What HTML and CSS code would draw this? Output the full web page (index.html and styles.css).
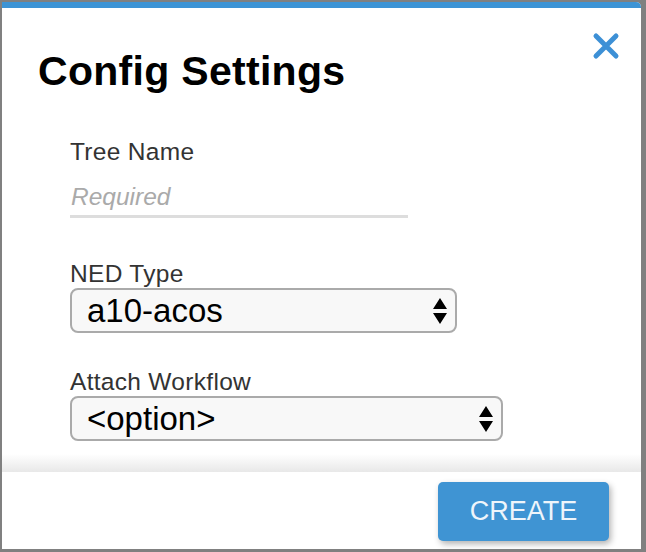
FILE: index.html
```html
<!DOCTYPE html>
<html lang="en">
<head>
    <meta charset="UTF-8">
    <meta name="viewport" content="width=device-width, initial-scale=1.0">
    <title>Config Settings</title>
    <link rel="stylesheet" href="styles.css">
</head>
<body>

    <div class="modal">
        <div class="modal-header">
            <h1 class="modal-title">Config Settings</h1>
            <button class="close-button" aria-label="Close">
                <svg width="28" height="28" viewBox="0 0 28 28">
                    <path d="M4 4 L24 24 M24 4 L4 24" stroke="#3d90d6" stroke-width="5" stroke-linecap="round" fill="none"/>
                </svg>
            </button>
        </div>

        <div class="modal-body">
            <label class="field-label" for="treeName">Tree Name</label>
            <input id="treeName" class="text-input" type="text" placeholder="Required">

            <label class="field-label spaced" for="nedType">NED Type</label>
            <div class="select-wrap ned">
                <select id="nedType" class="select-box">
                    <option>a10-acos</option>
                </select>
                <svg class="select-arrows" width="14" height="26" viewBox="0 0 14 26">
                    <path d="M7 0 L14 11 L0 11 Z M0 15 L14 15 L7 26 Z" fill="#000"/>
                </svg>
            </div>

            <label class="field-label spaced-small" for="workflow">Attach Workflow</label>
            <div class="select-wrap workflow">
                <select id="workflow" class="select-box">
                    <option>&lt;option&gt;</option>
                </select>
                <svg class="select-arrows" width="14" height="26" viewBox="0 0 14 26">
                    <path d="M7 0 L14 11 L0 11 Z M0 15 L14 15 L7 26 Z" fill="#000"/>
                </svg>
            </div>
        </div>

        <div class="modal-footer">
            <button class="create-button">CREATE</button>
        </div>
    </div>

</body>
</html>
```

FILE: styles.css
```css
html, body {
    height: 100%;
}

body {
    margin: 0;
    padding: 2px 5px 3px 2px;
    box-sizing: border-box;
    background-color: #808080;
    font-family: "Liberation Sans", Arial, sans-serif;
    overflow: hidden;
}

.modal {
    height: 100%;
    display: flex;
    flex-direction: column;
    background-color: #fff;
    border-top-right-radius: 5px;
    overflow: hidden;
}

.modal-header {
    position: relative;
    height: 101px;
    box-sizing: border-box;
    border-top: 6px solid #3d94d5;
    padding: 43px 0 0 36px;
}

.modal-title {
    margin: 0;
    font-size: 41px;
    line-height: 40px;
    font-weight: bold;
    letter-spacing: 0.3px;
    color: #000;
}

.close-button {
    position: absolute;
    top: 24px;
    right: 21px;
    padding: 0;
    border: none;
    background: none;
    cursor: pointer;
}

.close-button svg {
    display: block;
}

.modal-body {
    flex: 1;
    display: flex;
    flex-direction: column;
    align-items: flex-start;
    padding: 35px 0 0 68px;
    background: linear-gradient(to bottom, #fff calc(100% - 18px), #e8e8e8);
}

.field-label {
    font-size: 24.5px;
    line-height: 28px;
    letter-spacing: 0.3px;
    color: #333;
}

.field-label.spaced {
    margin-top: 42px;
}

.field-label.spaced-small {
    margin-top: 35px;
}

.text-input {
    margin-top: 17px;
    width: 338px;
    box-sizing: border-box;
    padding: 0 0 4px 1px;
    border: none;
    border-bottom: 3px solid #ddd;
    font-family: inherit;
    font-size: 24.5px;
    line-height: 28px;
    height: 35px;
    outline: none;
    background: none;
}

.text-input::placeholder {
    color: #aaa;
    font-style: italic;
}

.select-wrap {
    position: relative;
}

.select-wrap.ned {
    width: 387px;
}

.select-wrap.workflow {
    width: 433px;
}

.select-box {
    display: block;
    width: 100%;
    height: 45px;
    box-sizing: border-box;
    appearance: none;
    -webkit-appearance: none;
    border: 2px solid #aaa;
    border-radius: 8px;
    background-color: #f8f8f8;
    padding: 0 40px 0 15px;
    font-family: inherit;
    font-size: 33px;
    color: #000;
    outline: none;
}

.select-arrows {
    position: absolute;
    top: 10px;
    right: 10px;
    pointer-events: none;
}

.modal-footer {
    height: 77px;
    box-sizing: border-box;
    display: flex;
    justify-content: flex-end;
    align-items: flex-start;
    padding: 10px 32px 0 0;
}

.create-button {
    width: 171px;
    height: 59px;
    border: none;
    border-radius: 5px;
    background-color: #3f94d3;
    color: #eef5fb;
    font-family: inherit;
    font-size: 27px;
    cursor: pointer;
    box-shadow: 2px 3px 6px rgba(0, 0, 0, 0.3);
}
```
